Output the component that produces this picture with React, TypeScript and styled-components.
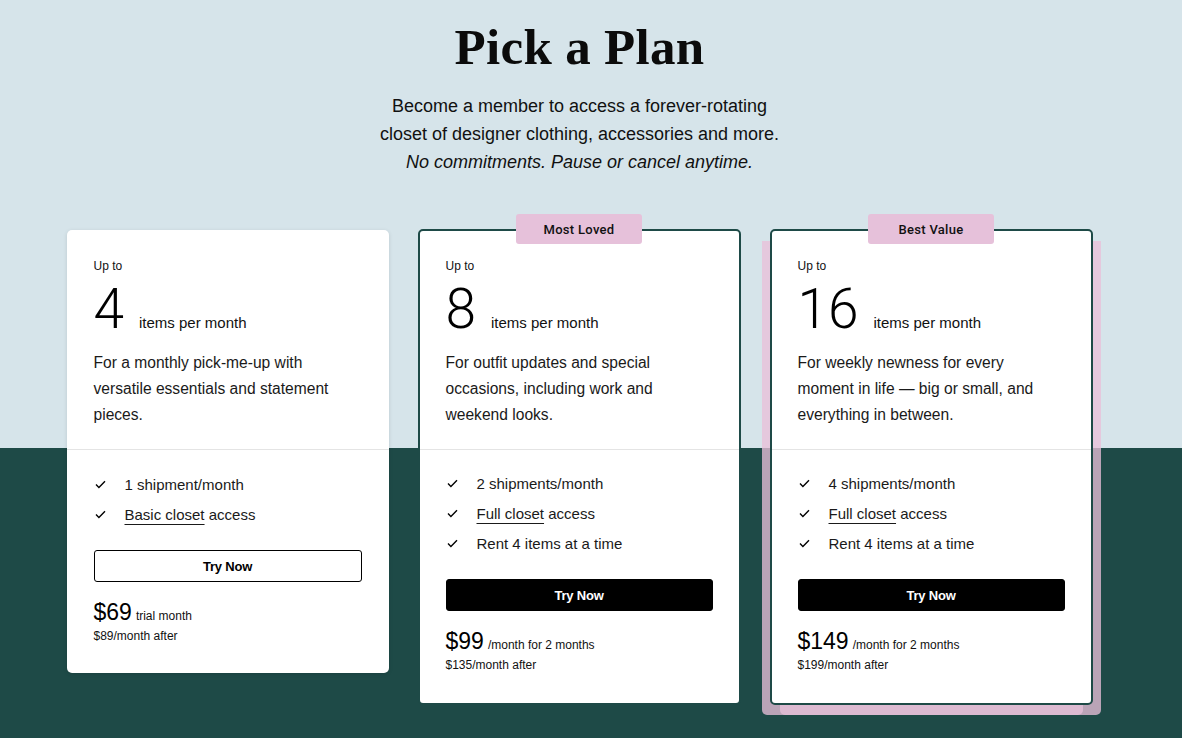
import React from "react";
import styled, { createGlobalStyle } from "styled-components";

const GlobalStyle = createGlobalStyle`
  html, body {
    margin: 0;
    padding: 0;
  }
  body {
    font-family: "Liberation Sans", Arial, sans-serif;
    color: #111;
    background: linear-gradient(to bottom, #d6e4ea 0, #d6e4ea 448px, #1e4a47 448px, #1e4a47 100%);
    min-height: 738px;
  }
`;

const Page = styled.main`
  width: 1182px;
  height: 738px;
  overflow: hidden;
  padding-right: 23px;
  box-sizing: border-box;
  display: flex;
  flex-direction: column;
  align-items: center;
`;

const Title = styled.h1`
  margin: 17px 0 0;
  font-family: "Liberation Serif", "Times New Roman", serif;
  font-weight: 700;
  font-size: 51px;
  line-height: 60px;
  letter-spacing: 0.3px;
  color: #0b0b0b;
`;

const Intro = styled.p`
  margin: 15px 0 0;
  text-align: center;
  font-size: 18px;
  line-height: 28px;
  color: #111;

  em {
    font-style: italic;
  }
`;

const Plans = styled.section`
  margin-top: 53px;
  display: flex;
  align-items: flex-start;
  gap: 29px;
`;

const PlanSlot = styled.div`
  position: relative;
`;

const Backdrop = styled.div<{ $inner?: boolean }>`
  position: absolute;
  top: 12px;
  bottom: -10px;
  left: ${(p) => (p.$inner ? "10px" : "-8px")};
  right: ${(p) => (p.$inner ? "10px" : "-8px")};
  border-radius: 0 0 5px 5px;
  background: ${(p) => (p.$inner ? "#dcbad1" : "rgba(233, 191, 217, 0.77)")};
`;

const Card = styled.article<{ $featured?: boolean }>`
  position: relative;
  box-sizing: border-box;
  width: ${(p) => (p.$featured ? "323px" : "322px")};
  margin-top: ${(p) => (p.$featured ? "0" : "1px")};
  background: #fff;
  border-radius: 5px;
  border: ${(p) => (p.$featured ? "2px solid #1e4a47" : "none")};
  box-shadow: ${(p) => (p.$featured ? "none" : "0 1px 4px rgba(0,0,0,0.12)")};
`;

const Badge = styled.div`
  position: absolute;
  top: -17px;
  left: 50%;
  transform: translateX(-50%);
  width: 126px;
  height: 30px;
  border-radius: 3px;
  background: #e6c1da;
  display: flex;
  align-items: center;
  justify-content: center;
  font-family: Roboto, "Liberation Sans", sans-serif;
  font-weight: 500;
  font-size: 13px;
  letter-spacing: 0.3px;
  color: #111;
`;

const Top = styled.div<{ $featured?: boolean }>`
  padding: ${(p) => (p.$featured ? "27px 26px 21px" : "28px 27px 21px")};
  border-bottom: 1px solid #e4e4e4;
`;

const UpTo = styled.div`
  font-size: 12px;
  line-height: 16px;
`;

const Amount = styled.div`
  display: flex;
  align-items: baseline;
  gap: 15px;
  margin-top: 8px;
`;

const Count = styled.span`
  font-family: Roboto, "Liberation Sans", sans-serif;
  font-weight: 300;
  font-size: 55px;
  line-height: 54px;
  color: #000;
`;

const CountLabel = styled.span`
  font-size: 15px;
`;

const Blurb = styled.p`
  margin: 14px 0 0;
  max-width: 252px;
  font-size: 15.6px;
  line-height: 26px;
  color: #1a1a1a;
`;

const Bottom = styled.div<{ $featured?: boolean }>`
  padding: ${(p) => (p.$featured ? "18px 26px 30px" : "19px 27px 29px")};
`;

const Features = styled.ul`
  list-style: none;
  margin: 0;
  padding: 0;
`;

const Feature = styled.li`
  display: flex;
  align-items: center;
  gap: 19px;
  height: 30px;
  font-size: 15px;
  color: #1a1a1a;

  svg {
    flex: none;
    margin-left: 1px;
  }
`;

const Linked = styled.span`
  text-decoration: underline;
  text-decoration-thickness: 1px;
  text-underline-offset: 4px;
`;

const TryButton = styled.button<{ $solid?: boolean }>`
  display: block;
  width: 100%;
  height: 32px;
  margin-top: 21px;
  border-radius: 3px;
  border: 1px solid #000;
  background: ${(p) => (p.$solid ? "#000" : "#fff")};
  color: ${(p) => (p.$solid ? "#fff" : "#000")};
  font-family: "Liberation Sans", Arial, sans-serif;
  font-weight: 700;
  font-size: 13px;
  letter-spacing: -0.2px;
  cursor: pointer;
`;

const PriceRow = styled.div`
  display: flex;
  align-items: baseline;
  gap: 4px;
  margin-top: 16px;
`;

const Price = styled.span`
  font-size: 23px;
  line-height: 28px;
  color: #000;
`;

const PriceNote = styled.span`
  font-size: 12px;
`;

const After = styled.div`
  margin-top: 2px;
  font-size: 12px;
  line-height: 16px;
  color: #111;
`;

const Check = () => (
  <svg width="11" height="9" viewBox="0 0 11 9" fill="none">
    <path d="M1 4.6 3.9 7.5 10 1.3" stroke="#000" strokeWidth="1.4" />
  </svg>
);

type Plan = {
  count: number;
  blurb: string;
  shipments: string;
  closet: string;
  rent?: boolean;
  price: string;
  note: string;
  after: string;
  badge?: string;
  backdrop?: boolean;
};

const plans: Plan[] = [
  {
    count: 4,
    blurb: "For a monthly pick-me-up with versatile essentials and statement pieces.",
    shipments: "1 shipment/month",
    closet: "Basic closet",
    price: "$69",
    note: "trial month",
    after: "$89/month after",
  },
  {
    count: 8,
    blurb: "For outfit updates and special occasions, including work and weekend looks.",
    shipments: "2 shipments/month",
    closet: "Full closet",
    rent: true,
    price: "$99",
    note: "/month for 2 months",
    after: "$135/month after",
    badge: "Most Loved",
  },
  {
    count: 16,
    blurb: "For weekly newness for every moment in life \u2014 big or small, and everything in between.",
    shipments: "4 shipments/month",
    closet: "Full closet",
    rent: true,
    price: "$149",
    note: "/month for 2 months",
    after: "$199/month after",
    badge: "Best Value",
    backdrop: true,
  },
];

const PlanCard = ({ plan }: { plan: Plan }) => {
  const featured = !!plan.badge;
  return (
    <PlanSlot>
      {plan.backdrop && (
        <>
          <Backdrop />
          <Backdrop $inner />
        </>
      )}
      <Card $featured={featured}>
        {plan.badge && <Badge>{plan.badge}</Badge>}
        <Top $featured={featured}>
          <UpTo>Up to</UpTo>
          <Amount>
            <Count>{plan.count}</Count>
            <CountLabel>items per month</CountLabel>
          </Amount>
          <Blurb>{plan.blurb}</Blurb>
        </Top>
        <Bottom $featured={featured}>
          <Features>
            <Feature>
              <Check />
              {plan.shipments}
            </Feature>
            <Feature>
              <Check />
              <span>
                <Linked>{plan.closet}</Linked> access
              </span>
            </Feature>
            {plan.rent && (
              <Feature>
                <Check />
                Rent 4 items at a time
              </Feature>
            )}
          </Features>
          <TryButton $solid={featured}>Try Now</TryButton>
          <PriceRow>
            <Price>{plan.price}</Price>
            <PriceNote>{plan.note}</PriceNote>
          </PriceRow>
          <After>{plan.after}</After>
        </Bottom>
      </Card>
    </PlanSlot>
  );
};

export default function App() {
  return (
    <>
      <GlobalStyle />
      <Page>
        <Title>Pick a Plan</Title>
        <Intro>
          Become a member to access a forever-rotating
          <br />
          closet of designer clothing, accessories and more.
          <br />
          <em>No commitments. Pause or cancel anytime.</em>
        </Intro>
        <Plans>
          {plans.map((p) => (
            <PlanCard key={p.count} plan={p} />
          ))}
        </Plans>
      </Page>
    </>
  );
}
